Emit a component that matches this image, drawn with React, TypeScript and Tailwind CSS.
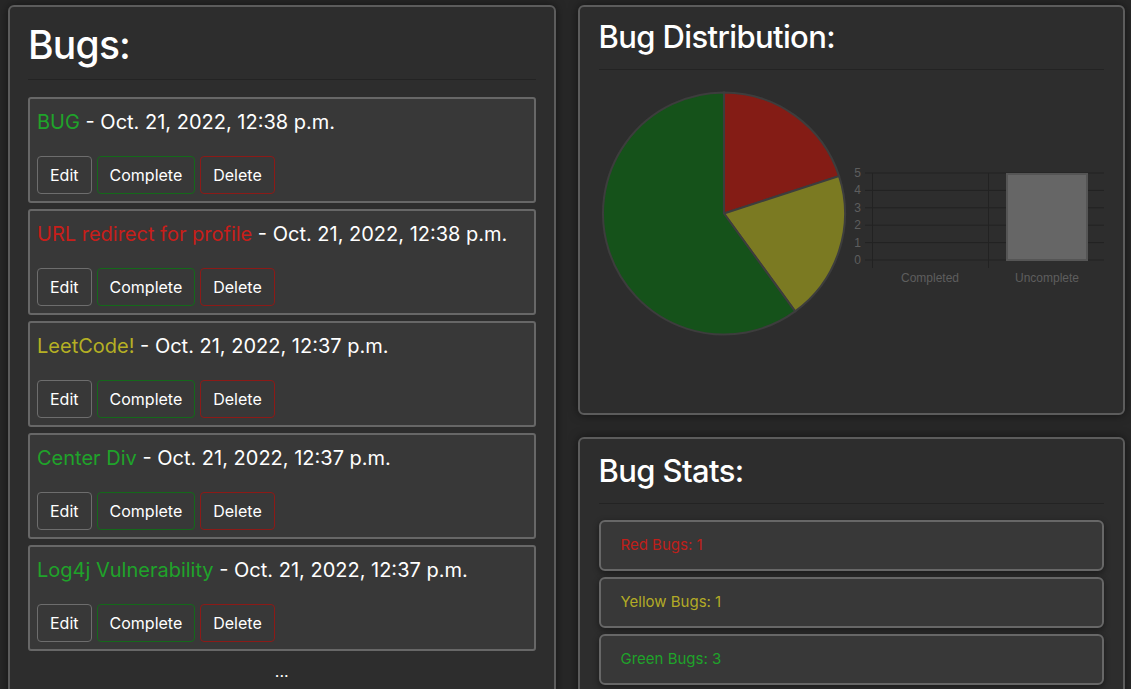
import React from "react";

const font = { fontFamily: "Inter, 'Noto Sans', 'Liberation Sans', sans-serif" };

type Bug = { name: string; color: string; date: string };

const bugs: Bug[] = [
  { name: "BUG", color: "text-[#1fa32a]", date: "Oct. 21, 2022, 12:38 p.m." },
  { name: "URL redirect for profile", color: "text-[#c81e1a]", date: "Oct. 21, 2022, 12:38 p.m." },
  { name: "LeetCode!", color: "text-[#b5b024]", date: "Oct. 21, 2022, 12:37 p.m." },
  { name: "Center Div", color: "text-[#1fa32a]", date: "Oct. 21, 2022, 12:37 p.m." },
  { name: "Log4j Vulnerability", color: "text-[#1fa32a]", date: "Oct. 21, 2022, 12:37 p.m." },
];

function BugItem({ bug }: { bug: Bug }) {
  return (
    <div className="border-2 border-[#676767] bg-[#383838] rounded-[3px] px-[7px] pt-[11px] pb-[7px]">
      <div className="text-[20px] leading-[24px] text-white">
        <span className={bug.color}>{bug.name}</span> - {bug.date}
      </div>
      <div className="flex gap-[5px] mt-[22px]">
        <button className="h-[38px] px-[12px] border border-[#6d6d6d] rounded-[4px] text-white text-[16px] bg-[#383838]">Edit</button>
        <button className="h-[38px] px-[12px] border border-[#14691a] rounded-[4px] text-white text-[16px] bg-[#383838]">Complete</button>
        <button className="h-[38px] px-[12px] border border-[#8c1a17] rounded-[4px] text-white text-[16px] bg-[#383838]">Delete</button>
      </div>
    </div>
  );
}

function Charts() {
  const cx = 125, cy = 127.5, r = 121;
  const gridYs = [174, 156.6, 139.2, 121.8, 104.4, 87];
  return (
    <svg width="507" height="300" viewBox="0 0 507 300" className="block">
      <path d={`M${cx},${cy} L125,6.5 A${r},${r} 0 0 1 240.08,90.11 Z`} fill="#841c15" stroke="#3d3d3d" strokeWidth="2" />
      <path d={`M${cx},${cy} L240.08,90.11 A${r},${r} 0 0 1 196.12,225.39 Z`} fill="#7b7a22" stroke="#3d3d3d" strokeWidth="2" />
      <path d={`M${cx},${cy} L196.12,225.39 A${r},${r} 0 1 1 125,6.5 Z`} fill="#15521a" stroke="#3d3d3d" strokeWidth="2" />
      {gridYs.map((y, i) => (
        <g key={i}>
          <line x1="266" x2="505" y1={y} y2={y} stroke="#222222" strokeWidth="1" />
          <text x="262" y={y + 4} textAnchor="end" fontSize="12" fill="#5e5e5e" fontFamily="'Liberation Sans', Arial, sans-serif">{i}</text>
        </g>
      ))}
      <line x1="273.5" x2="273.5" y1="87" y2="182" stroke="#222222" strokeWidth="1" />
      <line x1="389.5" x2="389.5" y1="87" y2="182" stroke="#222222" strokeWidth="1" />
      <rect x="408" y="88" width="80" height="86" fill="#666666" stroke="#555555" strokeWidth="2" />
      <text x="331" y="196" textAnchor="middle" fontSize="12" fill="#5e5e5e" fontFamily="'Liberation Sans', Arial, sans-serif">Completed</text>
      <text x="448" y="196" textAnchor="middle" fontSize="12" fill="#5e5e5e" fontFamily="'Liberation Sans', Arial, sans-serif">Uncomplete</text>
    </svg>
  );
}

function StatItem({ text, color }: { text: string; color: string }) {
  return (
    <div className={`h-[51px] flex items-center border-2 border-[#676767] bg-[#383838] rounded-[6px] pl-[20px] text-[15px] shadow-[0_2px_6px_rgba(0,0,0,0.45)] ${color}`}>
      {text}
    </div>
  );
}

export default function App() {
  return (
    <div className="h-[689px] overflow-hidden bg-[#272727]" style={font}>
      <div className="grid grid-cols-2 gap-[22px] pl-[8px] pr-[6px] pt-[5px]">
        <div className="border-2 border-[#5c5c5c] rounded-[6px] bg-[#2d2d2d] px-[18px] pt-[14px] shadow-[0_0_10px_rgba(0,0,0,0.5)]">
          <h1 className="text-[39px] leading-[47px] font-medium tracking-[-0.02em] text-white">Bugs:</h1>
          <hr className="mt-[11px] mb-[17px] border-t border-[#232323]" />
          <div className="flex flex-col gap-[6px]">
            {bugs.map((b, i) => (
              <BugItem key={i} bug={b} />
            ))}
          </div>
          <div className="text-center text-white text-[16px] mt-[8px] pb-[20px]">...</div>
        </div>
        <div className="flex flex-col gap-[22px]">
          <div className="border-2 border-[#5c5c5c] rounded-[6px] bg-[#2d2d2d] px-[19px] pt-[11px] h-[410px] shadow-[0_0_10px_rgba(0,0,0,0.5)]">
            <h2 className="text-[31px] leading-[38px] font-medium tracking-[-0.02em] text-white">Bug Distribution:</h2>
            <hr className="mt-[13px] mb-[16px] border-t border-[#232323]" />
            <Charts />
          </div>
          <div className="border-2 border-[#5c5c5c] rounded-[6px] bg-[#2d2d2d] px-[19px] pt-[13px] pb-[20px] shadow-[0_0_10px_rgba(0,0,0,0.5)]">
            <h2 className="text-[31px] leading-[38px] font-medium tracking-[-0.02em] text-white">Bug Stats:</h2>
            <hr className="mt-[13px] mb-[16px] border-t border-[#232323]" />
            <div className="flex flex-col gap-[6px]">
              <StatItem text="Red Bugs: 1" color="text-[#c01f1a]" />
              <StatItem text="Yellow Bugs: 1" color="text-[#b3ab26]" />
              <StatItem text="Green Bugs: 3" color="text-[#1fa32a]" />
            </div>
          </div>
        </div>
      </div>
    </div>
  );
}
